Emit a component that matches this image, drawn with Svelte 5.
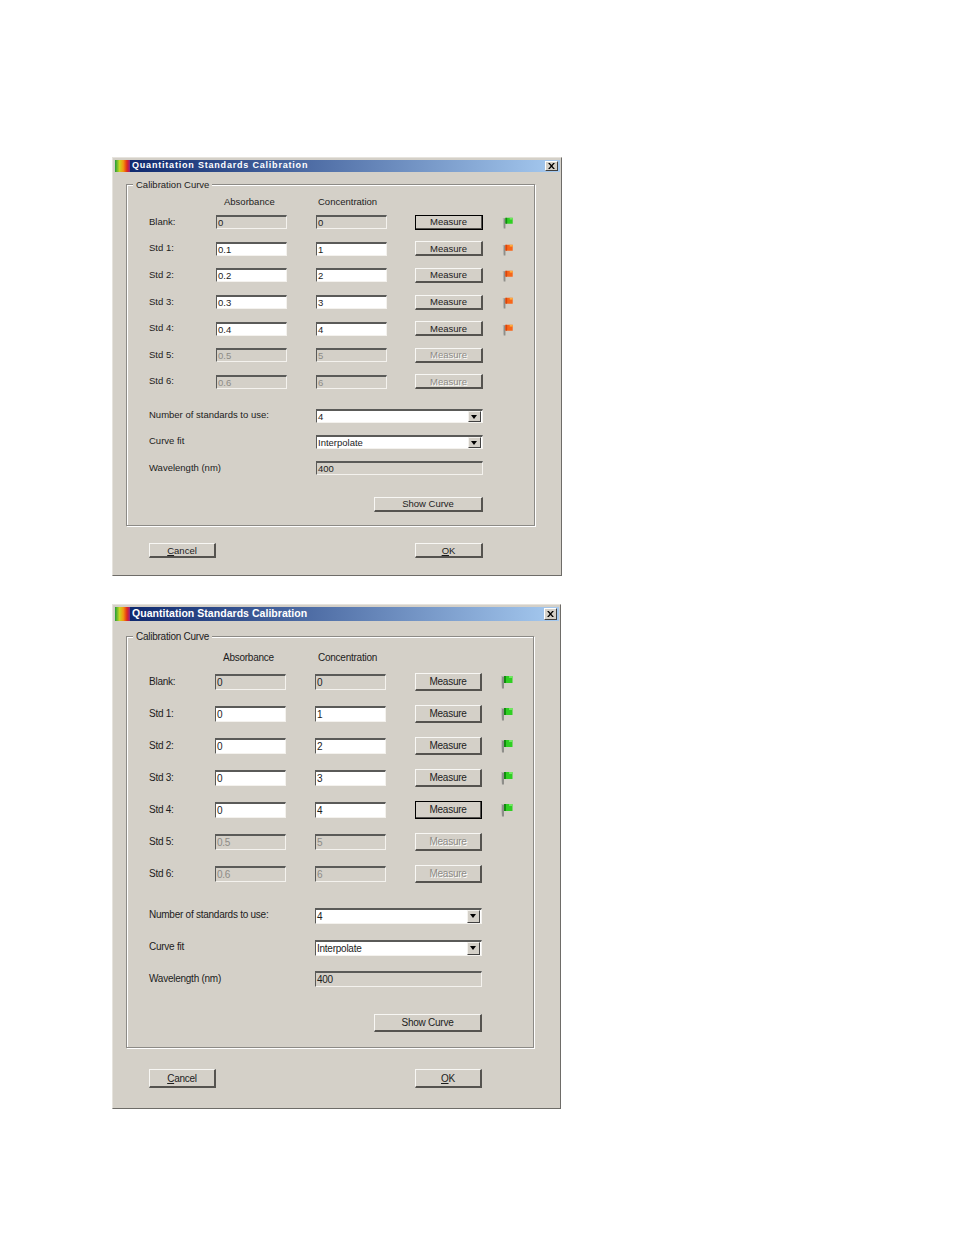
<script>
  const rows = [
    { label: 'Blank:', state: 'ro', conc: '0' },
    { label: 'Std 1:', state: 'on', conc: '1' },
    { label: 'Std 2:', state: 'on', conc: '2' },
    { label: 'Std 3:', state: 'on', conc: '3' },
    { label: 'Std 4:', state: 'on', conc: '4' },
    { label: 'Std 5:', state: 'off', conc: '5' },
    { label: 'Std 6:', state: 'off', conc: '6' }
  ];
  const dialogs = [
    { cls: 'small', abs: ['0', '0.1', '0.2', '0.3', '0.4', '0.5', '0.6'], flags: ['g', 'o', 'o', 'o', 'o'], focus: 0 },
    { cls: 'large', abs: ['0', '0', '0', '0', '0', '0.5', '0.6'], flags: ['g', 'g', 'g', 'g', 'g'], focus: 4 }
  ];
  const flagColors = {
    g: ['#2fcf22', '#128a10', '#6fe860'],
    o: ['#f7661a', '#d9440c', '#ffb040']
  };
</script>

{#snippet flag(kind)}
  <svg class="flag" viewBox="0 0 12 14" aria-hidden="true">
    <path d="M0 1.500h3v12H1z" fill="#8e8e8a" />
    <path d="M0 1.500h1v9H.7z" fill="#c4c4c0" />
    <path d="M3 1h8.500v7H5v-1H3z" fill={flagColors[kind][0]} />
    <path d="M3 1h2v7H3z" fill={flagColors[kind][1]} />
    <path d="M8 1h3.500v2H8z" fill={flagColors[kind][2]} />
  </svg>
{/snippet}

<main class="page">
  {#each dialogs as d}
    <section class="dialog {d.cls}">
      <header class="title">
        <span class="appicon"></span>
        <span class="caption">Quantitation Standards Calibration</span>
        <span class="close"><svg viewBox="0 0 8 7"><path d="M0 0h2l2 2.200L6 0h2L5 3.500 8 7H6L4 4.800 2 7H0l3-3.500z" /></svg></span>
      </header>

      <div class="group">
        <span class="legend">Calibration Curve</span>
        <div class="heads">
          <span class="head abs">Absorbance</span>
          <span class="head conc">Concentration</span>
        </div>

        {#each rows as r, i}
          <div class="row">
            <span class="label">{r.label}</span>
            <span class="field short {r.state}">{d.abs[i]}</span>
            <span class="field short {r.state}">{r.conc}</span>
            <button class="btn measure" class:focus={d.focus === i} disabled={r.state === 'off'}>Measure</button>
            {#if d.flags[i]}{@render flag(d.flags[i])}{/if}
          </div>
        {/each}

        <div class="row opt first">
          <span class="label wide">Number of standards to use:</span>
          <span class="field long on combo">4<span class="arrow"></span></span>
        </div>
        <div class="row opt">
          <span class="label wide">Curve fit</span>
          <span class="field long on combo">Interpolate<span class="arrow"></span></span>
        </div>
        <div class="row opt">
          <span class="label wide">Wavelength (nm)</span>
          <span class="field long ro">400</span>
        </div>
        <div class="showrow"><button class="btn show">Show Curve</button></div>
      </div>

      <footer class="foot">
        <button class="btn action"><u>C</u>ancel</button>
        <button class="btn action"><u>O</u>K</button>
      </footer>
    </section>
  {/each}
</main>

<style>
  :global(body) { margin: 0; background: #fff; }
  .page {
    width: 954px; height: 1235px; box-sizing: border-box; padding: 157px 0 0 112px;
    font-family: "Liberation Sans", Arial, sans-serif; color: #1c1c1c;
  }
  .dialog {
    box-sizing: border-box; background: #d4d0c8;
    border: 1px solid; border-color: #e6e3dd #6e6c68 #6e6c68 #e6e3dd;
    padding: 2px 1px 0 2px;
  }
  .small { width: 450px; height: 419px; margin-bottom: 28px; font-size: 9.5px; --row: 26.6px; --h: 14px; --bh: 15px; --ttl: 12px; }
  .large { width: 449px; height: 505px; font-size: 10px; letter-spacing: -.25px; --row: 32px; --h: 16px; --bh: 18px; --ttl: 14px; }

  .title {
    display: flex; align-items: center; height: var(--ttl); color: #fff; font-weight: 700;
    background: linear-gradient(90deg, #0a246a 0%, #a6caf0 100%);
  }
  .small .title { font-size: 9px; letter-spacing: .8px; }
  .large .title { font-size: 10.5px; letter-spacing: .04px; }
  .appicon {
    width: 15px; height: 100%; margin-right: 2px; flex: none;
    background: linear-gradient(90deg, #1f9c3a 0%, #c8d820 30%, #f29a10 55%, #e42a18 80%, #8a2090 100%);
  }
  .caption { flex: 1; white-space: nowrap; padding-bottom: 2px; }
  .close {
    width: 13px; height: calc(var(--ttl) - 2px); margin-right: 2px; background: #d4d0c8; box-sizing: border-box;
    border: 1px solid; border-color: #fff #404040 #404040 #fff;
    display: flex; align-items: center; justify-content: center;
  }
  .close svg { width: 7px; height: 6px; fill: #000; }

  .group {
    position: relative; box-sizing: border-box; margin-left: 11px; width: 409px;
    border: 1px solid #8c8a86; box-shadow: 1px 1px 0 #fff, inset 1px 1px 0 #fff;
  }
  .small .group { margin-top: 12px; height: 342px; padding: 10px 0 0 22px; }
  .large .group { margin-top: 15px; height: 412px; padding: 14px 0 0 22px; width: 408px; }
  .legend { position: absolute; left: 6px; top: -6px; padding: 0 3px; background: #d4d0c8; line-height: 12px; white-space: nowrap; }

  .heads { display: flex; height: 13px; line-height: 13px; }
  .small .heads { margin-bottom: 1px; }
  .large .heads { margin-bottom: 2px; }
  .head.abs { margin-left: 75px; width: 94px; }
  .large .head.abs { margin-left: 74px; width: 95px; }
  .row { display: flex; align-items: center; height: var(--row); }
  .label { width: 66px; flex: none; white-space: nowrap; transform: translateY(-1px); }
  .label.wide { width: 166px; }
  .small .label { width: 67px; }
  .small .label.wide { width: 167px; }

  .field {
    box-sizing: border-box; height: var(--h); line-height: calc(var(--h) - 3px); padding-left: 1px; flex: none; position: relative;
    border: 1px solid; border-color: #5a5a58 #f4f2ee #f4f2ee #5a5a58; border-width: 2px 1px 1px 1px;
  }
  .short { width: 71px; margin-right: 29px; }
  .long { width: 167px; }
  .on { background: #fff; }
  .ro { background: #d4d0c8; }
  .off { background: #d4d0c8; color: #8d8b86; }

  .btn {
    box-sizing: border-box; padding: 0; font: inherit; letter-spacing: inherit; color: inherit; background: #d4d0c8; flex: none;
    border: 1px solid; border-color: #f8f7f4 #55534f #55534f #f8f7f4; border-width: 1px 2px 2px 1px;
    height: var(--bh);
  }
  .measure { width: 68px; margin-left: -1px; margin-right: 19px; }
  .large .measure { width: 67px; margin-left: 0; }
  .measure.focus { outline: 1px solid #000; outline-offset: -1px; }
  .measure:disabled { color: #8d8b86; text-shadow: 1px 1px 0 #fff; }
  .flag { width: 12px; height: 14px; flex: none; }
  .small .flag { height: 12px; transform: translateY(1px); }

  .combo { padding-right: 2px; }
  .arrow {
    position: absolute; right: 1px; top: 0; bottom: 0; width: 13px;
    background: #d4d0c8; border: 1px solid; border-color: #f4f2ee #404040 #404040 #f4f2ee; box-sizing: border-box;
  }
  .arrow::after {
    content: ""; position: absolute; left: 2px; top: 3px;
    border: 3.500px solid transparent; border-top: 4px solid #000; border-bottom: 0;
  }
  .opt { height: 26.2px; }
  .large .opt { height: 31.800px; }
  .small .first { margin-top: 7.500px; }
  .large .first { margin-top: 10px; }
  .showrow { display: flex; }
  .small .showrow { margin-top: 15.400px; padding-left: 225px; }
  .large .showrow { margin-top: 18.500px; padding-left: 225px; }
  .show { width: 109px; }
  .large .show { width: 108px; }
  .foot { display: flex; justify-content: space-between; margin-left: 34px; }
  .small .foot { width: 334px; margin-top: 17px; }
  .large .foot { width: 333px; margin-top: 21px; }
  .action { width: 67px; height: var(--bh); }
  .small .action + .action { width: 68px; }
  .large .action { height: 19px; }
</style>
